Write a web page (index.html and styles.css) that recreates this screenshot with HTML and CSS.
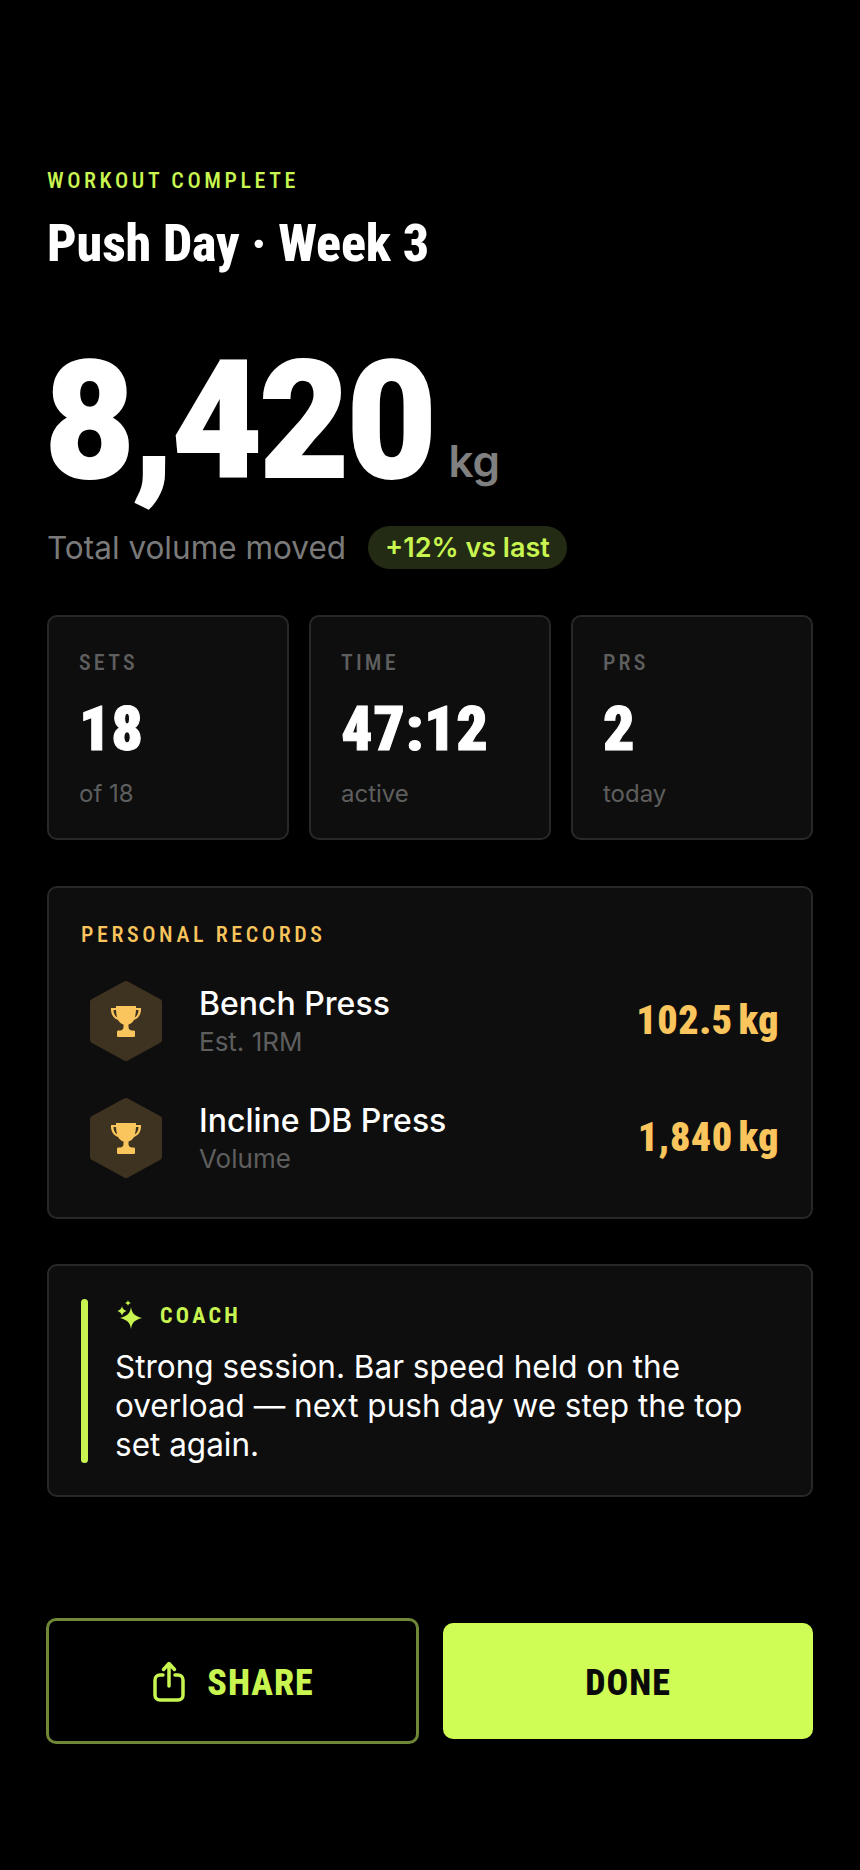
FILE: index.html
```html
<!DOCTYPE html>
<html lang="en">
<head>
  <meta charset="UTF-8">
  <title>Workout Complete</title>
  <link rel="stylesheet" href="styles.css">
</head>
<body>
  <div class="screen">
    <div class="eyebrow">WORKOUT COMPLETE</div>
    <h1>Push Day · Week 3</h1>

    <div class="hero">
      <span class="hero-num">8,420</span>
      <span class="hero-unit">kg</span>
    </div>
    <div class="hero-sub">
      <span>Total volume moved</span>
      <span class="pill">+12% vs last</span>
    </div>

    <div class="stats">
      <div class="card stat">
        <div class="stat-label">SETS</div>
        <div class="stat-value">18</div>
        <div class="stat-note">of 18</div>
      </div>
      <div class="card stat">
        <div class="stat-label">TIME</div>
        <div class="stat-value">47:12</div>
        <div class="stat-note">active</div>
      </div>
      <div class="card stat">
        <div class="stat-label">PRS</div>
        <div class="stat-value">2</div>
        <div class="stat-note">today</div>
      </div>
    </div>

    <div class="card records">
      <div class="records-title">PERSONAL RECORDS</div>
      <div class="record-list">
        <div class="record">
          <svg class="hex" viewBox="0 0 72 80">
            <path class="hex-bg" d="M36 3 L69 21 V59 L36 77 L3 59 V21 Z"/>
            <path class="trophy" d="M26 25 H46 V27 H51 C51.500 33 48.500 37.500 44 39 C42.500 41.500 40.500 43 38.500 43.500 V46 C38.500 48 39.500 49 41.500 49.500 H43.500 C44.500 49.500 45 50 45 51 V54.500 C45 55.500 44.500 56 43.500 56 H28.500 C27.500 56 27 55.500 27 54.500 V51 C27 50 27.500 49.500 28.500 49.500 H30.500 C32.500 49 33.500 48 33.500 46 V43.500 C31.500 43 29.500 41.500 28 39 C23.500 37.500 20.500 33 21 27 H26 Z M23.500 29 C23.500 32.500 25 35 27.200 36.500 C26.600 34.500 26.200 32 26 29 Z M48.500 29 H46 C45.800 32 45.400 34.500 44.800 36.500 C47 35 48.500 32.500 48.500 29 Z"/>
          </svg>
          <div class="record-info">
            <div class="record-name">Bench Press</div>
            <div class="record-note">Est. 1RM</div>
          </div>
          <div class="record-value">102.5 kg</div>
        </div>
        <div class="record">
          <svg class="hex" viewBox="0 0 72 80">
            <path class="hex-bg" d="M36 3 L69 21 V59 L36 77 L3 59 V21 Z"/>
            <path class="trophy" d="M26 25 H46 V27 H51 C51.500 33 48.500 37.500 44 39 C42.500 41.500 40.500 43 38.500 43.500 V46 C38.500 48 39.500 49 41.500 49.500 H43.500 C44.500 49.500 45 50 45 51 V54.500 C45 55.500 44.500 56 43.500 56 H28.500 C27.500 56 27 55.500 27 54.500 V51 C27 50 27.500 49.500 28.500 49.500 H30.500 C32.500 49 33.500 48 33.500 46 V43.500 C31.500 43 29.500 41.500 28 39 C23.500 37.500 20.500 33 21 27 H26 Z M23.500 29 C23.500 32.500 25 35 27.200 36.500 C26.600 34.500 26.200 32 26 29 Z M48.500 29 H46 C45.800 32 45.400 34.500 44.800 36.500 C47 35 48.500 32.500 48.500 29 Z"/>
          </svg>
          <div class="record-info">
            <div class="record-name">Incline DB Press</div>
            <div class="record-note">Volume</div>
          </div>
          <div class="record-value">1,840 kg</div>
        </div>
      </div>
    </div>

    <div class="card coach">
      <div class="coach-bar"></div>
      <div class="coach-body">
        <div class="coach-head">
          <svg class="sparkle" viewBox="0 0 26 30">
            <path d="M14 7 C15 13.500 17.500 16 25 18 C17.500 20 15 22.500 14 29 C13 22.500 10.500 20 3 18 C10.500 16 13 13.500 14 7 Z"/>
            <path d="M5 6.300 C5.600 8.800 7 10.300 9.700 11 C7 11.700 5.600 13.200 5 15.700 C4.400 13.200 3 11.700 0.300 11 C3 10.300 4.400 8.800 5 6.300 Z"/>
            <path d="M11 0 C11.400 1.800 12.200 2.600 14 3 C12.200 3.400 11.400 4.200 11 6 C10.600 4.200 9.800 3.400 8 3 C9.800 2.600 10.600 1.800 11 0 Z"/>
          </svg>
          <span class="coach-title">COACH</span>
        </div>
        <p class="coach-text">Strong session. Bar speed held on the overload — next push day we step the top set again.</p>
      </div>
    </div>

    <div class="actions">
      <button class="btn btn-share">
        <svg class="share-icon" viewBox="0 0 32 41">
          <path d="M10 14 H7 C4 14 2 16 2 19 V34 C2 37 4 39 7 39 H25 C28 39 30 37 30 34 V19 C30 16 28 14 25 14 H22"/>
          <path d="M16 25 V3 M10.500 8.500 L16 2.500 L21.500 8.500"/>
        </svg>
        <span>SHARE</span>
      </button>
      <button class="btn btn-done"><span>DONE</span></button>
    </div>
  </div>
</body>
</html>
```

FILE: styles.css
```css
* {
  box-sizing: border-box;
}

body {
  margin: 0;
  background: #000;
  color: #fff;
  font-family: 'Inter', sans-serif;
}

.screen {
  height: 1870px;
  padding: 168px 47px 0;
  overflow: hidden;
}

.eyebrow,
h1,
.stat-label,
.stat-value,
.records-title,
.record-value,
.coach-title,
.btn {
  font-family: 'Roboto', sans-serif;
  font-stretch: 75%;
}

.eyebrow {
  font-size: 22px;
  font-weight: 500;
  line-height: 26px;
  letter-spacing: 3.6px;
  color: #c8f550;
}

h1 {
  margin: 20px 0 0;
  font-weight: 800;
  font-size: 52px;
  line-height: 60px;
  letter-spacing: -0.15px;
}

.hero {
  display: flex;
  align-items: baseline;
  gap: 16px;
  margin-top: 72px;
  height: 150px;
}

.hero-num {
  display: inline-block;
  margin: 0 -27px 0 -2px;
  font-family: 'Roboto', sans-serif;
  font-weight: 900;
  font-size: 164px;
  line-height: 150px;
  letter-spacing: -2px;
  -webkit-text-stroke: 2px #fff;
  transform: scaleX(0.94);
  transform-origin: left;
}

.hero-unit {
  font-size: 44px;
  font-weight: 600;
  color: #808080;
}

.hero-sub {
  display: flex;
  align-items: center;
  gap: 22px;
  margin-top: 30px;
  font-size: 31.5px;
  color: #7a7a7a;
}

.pill {
  padding: 0 17px;
  height: 43px;
  line-height: 43px;
  border-radius: 22px;
  background: #232b14;
  color: #c8f550;
  font-size: 27px;
  font-weight: 600;
}

.card {
  background: #0e0e0e;
  border: 2px solid #282828;
  border-radius: 10px;
}

.stats {
  display: grid;
  grid-template-columns: repeat(3, 1fr);
  gap: 20px;
  margin-top: 46px;
}

.stat {
  height: 225px;
  padding: 33px 30px;
}

.stat-label {
  font-size: 22px;
  font-weight: 500;
  line-height: 26px;
  letter-spacing: 3.2px;
  color: #5e5e5e;
}

.stat-value {
  margin-top: 18px;
  font-weight: 900;
  font-size: 62px;
  line-height: 70px;
  letter-spacing: 0.5px;
  -webkit-text-stroke: 1px #fff;
}

.stat-note {
  margin-top: 15px;
  font-size: 24px;
  color: #5e5e5e;
}

.records {
  margin-top: 46px;
  height: 333px;
  padding: 34px 32px 0;
}

.records-title {
  font-size: 22px;
  font-weight: 500;
  line-height: 26px;
  letter-spacing: 3.6px;
  color: #f9c55c;
}

.record-list {
  margin-top: 14px;
}

.record {
  display: flex;
  align-items: center;
  height: 117px;
}

.hex {
  width: 72px;
  height: 80px;
  margin-left: 9px;
  flex-shrink: 0;
}

.hex-bg {
  fill: #3e3220;
  stroke: #3e3220;
  stroke-width: 6px;
  stroke-linejoin: round;
}

.trophy {
  fill: #f9c55c;
  fill-rule: evenodd;
}

.record-info {
  flex: 1;
  margin-left: 37px;
}

.record-name {
  font-size: 32px;
  font-weight: 500;
  line-height: 38px;
}

.record-note {
  margin-top: 4px;
  font-size: 26px;
  line-height: 30px;
  color: #5e5e5e;
}

.record-value {
  font-weight: 900;
  font-size: 40px;
  letter-spacing: 0.5px;
  word-spacing: -4px;
  color: #f9c55c;
}

.coach {
  display: flex;
  gap: 27px;
  margin-top: 45px;
  height: 233px;
  padding: 33px 32px 0;
}

.coach-bar {
  width: 7px;
  height: 164px;
  flex-shrink: 0;
  border-radius: 4px;
  background: #c8f550;
}

.coach-head {
  display: flex;
  align-items: center;
  gap: 17px;
  margin-top: 1px;
}

.sparkle {
  width: 26px;
  height: 30px;
  margin-left: 2px;
  fill: #c8f550;
}

.coach-title {
  font-weight: 700;
  font-size: 22px;
  letter-spacing: 3.3px;
  color: #c8f550;
}

.coach-text {
  margin: 17px 0 0;
  font-size: 31.5px;
  line-height: 39px;
}

.actions {
  display: flex;
  align-items: center;
  gap: 24px;
  margin-top: 121px;
}

.btn {
  display: flex;
  align-items: center;
  justify-content: center;
  gap: 22px;
  font-weight: 800;
  font-size: 36px;
  letter-spacing: 1px;
  border-radius: 10px;
  border: none;
}

.btn span {
  margin-top: 3px;
}

.btn-share {
  flex: 0 0 373px;
  margin-left: -1px;
  padding-left: 8px;
  height: 126px;
  background: #000;
  color: #c8f550;
  border: 3px solid #6f8736;
}

.btn-done {
  flex: 1;
  height: 116px;
  background: #cffc55;
  color: #0a0a0a;
}

.share-icon {
  width: 32px;
  height: 41px;
  fill: none;
  stroke: #c8f550;
  stroke-width: 3.5px;
  stroke-linecap: round;
  stroke-linejoin: round;
}
```
